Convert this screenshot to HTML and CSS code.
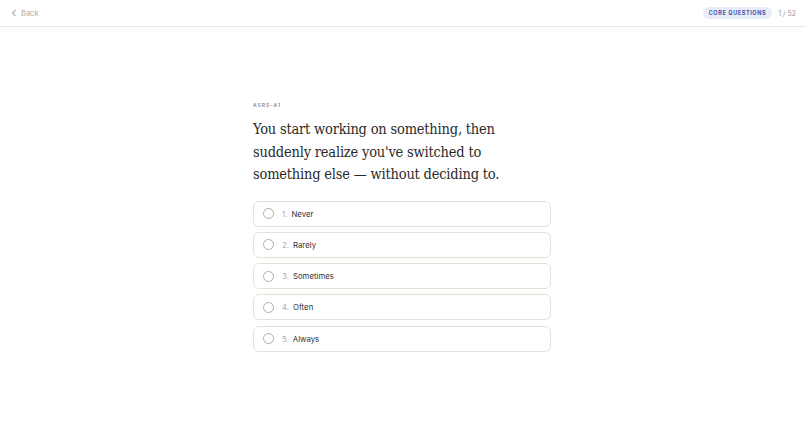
FILE: index.html
```html
<!DOCTYPE html>
<html>
<head>
<meta charset="utf-8">
<link rel="stylesheet" href="styles.css">
</head>
<body>
<header class="topbar">
  <a class="back"><svg width="6" height="8" viewBox="0 0 6 8"><path d="M4.5 0.8 L1.5 4 L4.5 7.2" fill="none" stroke="#aaa" stroke-width="1.1"/></svg><span>Back</span></a>
  <div class="right">
    <span class="badge">CORE QUESTIONS</span>
    <span class="count">1 / 52</span>
  </div>
</header>
<main class="main">
  <div class="card">
    <div class="code">ASRS-A1</div>
    <h1 class="question">You start working on something, then suddenly realize you've switched to something else — without deciding to.</h1>
    <div class="options">
      <div class="option"><span class="radio"></span><span class="num">1.</span><span class="label">Never</span></div>
      <div class="option"><span class="radio"></span><span class="num">2.</span><span class="label">Rarely</span></div>
      <div class="option"><span class="radio"></span><span class="num">3.</span><span class="label">Sometimes</span></div>
      <div class="option"><span class="radio"></span><span class="num">4.</span><span class="label">Often</span></div>
      <div class="option"><span class="radio"></span><span class="num">5.</span><span class="label">Always</span></div>
    </div>
  </div>
</main>
</body>
</html>
```
FILE: styles.css
```css
* { box-sizing: border-box; }
html, body { margin: 0; padding: 0; background: #fff; }
body { font-family: "Inter", "Noto Sans", sans-serif; color: #2b2b2b; }
.topbar {
  height: 27px;
  border-bottom: 1px solid #ebe9e6;
  display: flex;
  align-items: center;
  justify-content: space-between;
  padding: 0 10px 0 11px;
}
.back { display: flex; align-items: center; gap: 4px; color: #aaa; font-size: 7.5px; }
.right { display: flex; align-items: center; gap: 6px; }
.badge {
  background: #e9edfb;
  color: #3e56a8;
  font-size: 5.5px;
  font-weight: 700;
  letter-spacing: 0.6px;
  padding: 3px 6px;
  border-radius: 6px;
}
.count { color: #999; font-size: 7px; }
.main { display: flex; justify-content: center; padding-top: 75px; }
.card { width: 298px; margin-right: 2px; }
.code { font-size: 5px; letter-spacing: 1px; color: #888; font-weight: 600; margin-bottom: 10px; }
.question {
  font-family: "DejaVu Serif Condensed", "DejaVu Serif", serif;
  font-stretch: condensed;
  font-weight: 400;
  font-size: 14.5px;
  line-height: 22.5px;
  margin: 0 0 15px 0;
  color: #2a2a2a;
  letter-spacing: -0.2px;
}
.options { display: flex; flex-direction: column; gap: 5.25px; }
.option {
  height: 26px;
  border: 1px solid #e6e1d9;
  border-radius: 6px;
  display: flex;
  align-items: center;
  padding-left: 9px;
  font-size: 7.8px;
}
.radio {
  width: 11px; height: 11px;
  border: 1px solid #b5ada0;
  border-radius: 50%;
  margin-right: 8px;
}
.num { color: #aaa; margin-right: 4px; }
.label { color: #333; }
```
